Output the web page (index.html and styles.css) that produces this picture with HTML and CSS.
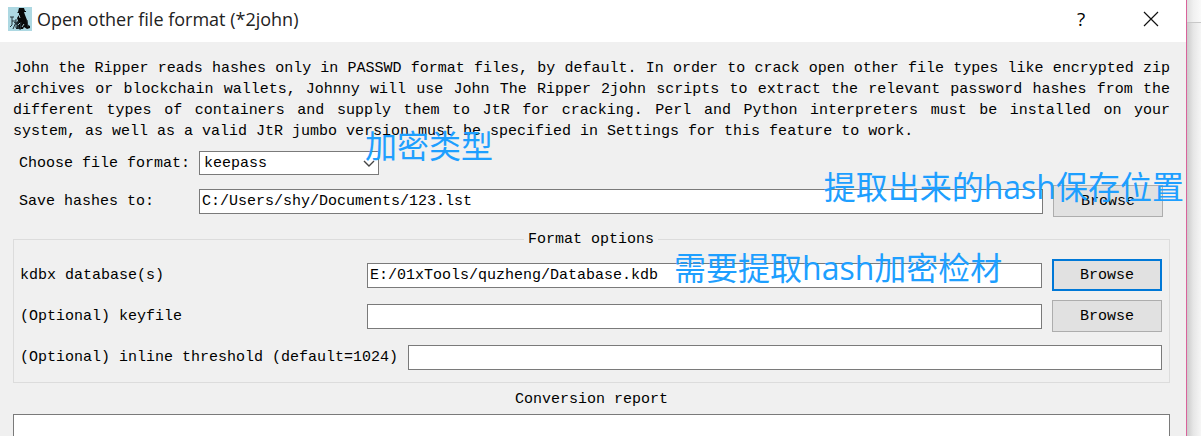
FILE: index.html
```
<!DOCTYPE html>
<html lang="en">
<head>
  <meta charset="UTF-8" />
  <meta name="viewport" content="width=device-width, initial-scale=1.0"/>
  <title>Open other file format (*2john)</title>
  <link rel="stylesheet" href="styles.css">
</head>
<body>

  <div class="window">
    <header class="titlebar">
      <svg class="app-icon" viewBox="0 0 24 24" aria-hidden="true">
        <rect width="24" height="24" fill="#add8e2"/>
        <path d="M11 1h5l1 3h1v1h-2l1 3 2 5 1 5 2 1v2l-3 1-3-2-1 2H8l1-4-2-1 3-3-1-3 2-3V6H9l1-1z" fill="#080808"/>
        <path d="M4 10v8l-2 2M2 10h4M8 12v9M6 15l4 3M10 14v8M13 15l-1 8M4 14h4M5 22l3-7 3 7M19 13l1 7" fill="none" stroke="#26343a"/>
        <path d="M11 8l1 3M10 18l2-2M14 20l2-3" fill="none" stroke="#a7c8d0"/>
      </svg>
      <h1>Open other file format (*2john)</h1>
      <button class="title-btn" type="button" aria-label="Help">?</button>
      <button class="title-btn" type="button" aria-label="Close">
        <svg class="close-icon" viewBox="0 0 16 16"><path d="M1 1l14 14M15 1L1 15" fill="none" stroke="#111" stroke-width="1.2"/></svg>
      </button>
    </header>

    <main class="content">
      <p class="intro">John the Ripper reads hashes only in PASSWD format files, by default. In order to crack open other file types like encrypted zip archives or blockchain wallets, Johnny will use John The Ripper 2john scripts to extract the relevant password hashes from the different types of containers and supply them to JtR for cracking. Perl and Python interpreters must be installed on your system, as well as a valid JtR jumbo version must be specified in Settings for this feature to work.</p>

      <div class="settings">
        <div class="row">
          <label for="format">Choose file format:</label>
          <div class="select-wrap">
            <select id="format">
              <option>keepass</option>
            </select>
            <svg class="chevron" viewBox="0 0 12 8" aria-hidden="true"><path d="M1 1l5 5 5-5" fill="none" stroke="#444" stroke-width="1.4"/></svg>
          </div>
        </div>
        <div class="row">
          <label for="output">Save hashes to:</label>
          <input type="text" id="output" value="C:/Users/shy/Documents/123.lst">
          <button class="browse" type="button">Browse</button>
        </div>
      </div>

      <fieldset class="options">
        <legend>Format options</legend>
        <div class="row">
          <label for="database">kdbx database(s)</label>
          <input type="text" id="database" value="E:/01xTools/quzheng/Database.kdb">
          <button class="browse default" type="button">Browse</button>
        </div>
        <div class="row">
          <label for="keyfile">(Optional) keyfile</label>
          <input type="text" id="keyfile">
          <button class="browse" type="button">Browse</button>
        </div>
        <div class="row">
          <label for="threshold">(Optional) inline threshold (default=1024)</label>
          <input type="text" id="threshold">
        </div>
      </fieldset>

      <label class="report-label" for="report">Conversion report</label>
      <textarea class="report" id="report" rows="1" readonly></textarea>
    </main>

    <!-- notes lying over the dialog -->
    <span class="note note-type" lang="zh">加密类型</span>
    <span class="note note-output" lang="zh">提取出来的hash保存位置</span>
    <span class="note note-source" lang="zh">需要提取hash加密检材</span>
  </div>
  <div class="backdrop"></div>

</body>
</html>
```
FILE: styles.css
```
:root {
  --bg: #f0f0f0;
  --field-border: #7a7a7a;
  --btn-bg: #e1e1e1;
  --btn-border: #adadad;
  --group-border: #dcdcdc;
  --accent: #0078d7;
  --note: #1e9fff;
  --frame: #d9639b;
}
* { box-sizing: border-box; }
body {
  margin: 0;
  display: flex;
  min-height: 100vh;
  background: #fff;
  color: #000;
  font-family: "Liberation Mono", monospace;
  font-size: 15px;
  line-height: 21px;
}
.window {
  flex: 1;
  display: flex;
  flex-direction: column;
  position: relative;
  background: var(--bg);
  border-right: 1px solid var(--frame);
}
.backdrop {
  width: 14px;
  background: linear-gradient(90deg, #cbcbcb, #e6e6e6 45%, #f6f6f6);
}
.backdrop::before {
  content: "";
  display: block;
  height: 22px;
  background: linear-gradient(90deg, #dedede, #f0f0f0 45%, #fafafa);
  border-bottom: 1px solid #c8c8c8;
}

/* title bar */
.titlebar {
  display: flex;
  align-items: center;
  height: 42px;
  padding-left: 8px;
  padding-bottom: 4px;
  background: #fff;
}
.app-icon {
  width: 24px;
  height: 24px;
}
.titlebar h1 {
  flex: 1;
  margin: 0 0 0 5px;
  font: 18px "Open Sans", sans-serif;
  color: #222;
}
.title-btn {
  display: flex;
  align-items: center;
  justify-content: center;
  width: 70px;
  height: 38px;
  padding: 0;
  border: none;
  background: none;
  font: 19px "Open Sans", sans-serif;
}
.close-icon {
  width: 16px;
  height: 16px;
}

/* form */
.content {
  flex: 1;
  display: flex;
  flex-direction: column;
  padding: 16px 16px 0 13px;
}
.intro {
  margin: 0 0 5px;
  text-align: justify;
}
.settings {
  display: grid;
  gap: 6px;
  padding: 0 7px 0 6px;
}
.row {
  display: flex;
  align-items: center;
  gap: 10px;
  height: 32px;
}
.settings label {
  width: 170px;
  white-space: nowrap;
}
input,
select,
.report {
  border: 1px solid var(--field-border);
  border-radius: 0;
  background: #fff;
  color: #000;
  font: inherit;
  outline: none;
}
input {
  flex: 1;
  min-width: 0;
  height: 25px;
  padding: 2px;
}
.select-wrap {
  position: relative;
  width: 180px;
}
select {
  display: block;
  width: 100%;
  height: 24px;
  padding: 0 4px;
  appearance: none;
}
.chevron {
  position: absolute;
  top: 9px;
  right: 4px;
  width: 12px;
  height: 8px;
  pointer-events: none;
}
.browse {
  width: 110px;
  height: 32px;
  padding: 0;
  border: 1px solid var(--btn-border);
  background: var(--btn-bg);
  color: #000;
  font: inherit;
}
.browse.default {
  border: 2px solid var(--accent);
}
.options {
  display: grid;
  gap: 9px;
  min-width: 0;
  margin: 12px 0 0;
  padding: 9px 7px 9px 6px;
  border: 1px solid var(--group-border);
}
.options legend {
  margin: 0 auto;
  padding: 0 4px;
}
.options label {
  min-width: 337px;
}
.report-label {
  margin: 6px 0 4px;
  text-align: center;
}
.report {
  flex: 1;
  width: 100%;
  min-height: 0;
  padding: 0 2px;
  border-bottom: none;
  resize: none;
}

/* notes */
.note {
  position: absolute;
  color: var(--note);
  font-family: "Open Sans", "Noto Sans CJK SC", sans-serif;
  font-size: 32px;
  line-height: 40px;
  white-space: nowrap;
  pointer-events: none;
}
.note-type {
  top: 126px;
  left: 365px;
}
.note-output {
  top: 167px;
  right: 2px;
}
.note-source {
  top: 248px;
  left: 674px;
}
```
